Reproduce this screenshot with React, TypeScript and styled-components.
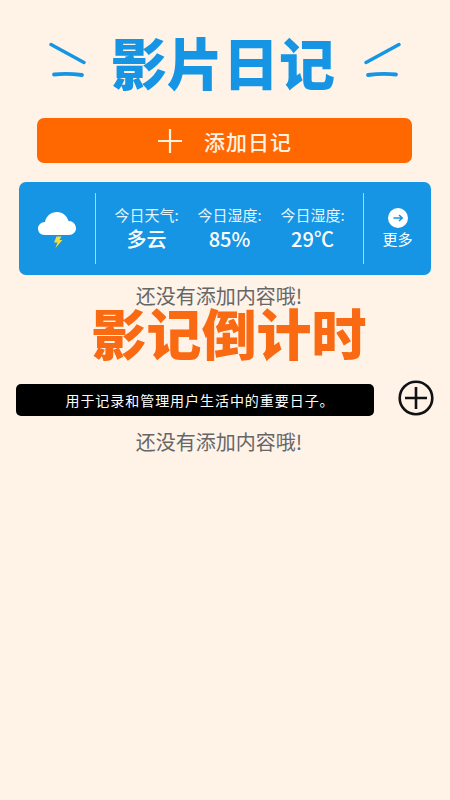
import styled, { createGlobalStyle } from "styled-components";

const GlobalStyle = createGlobalStyle`
  html, body {
    margin: 0;
    padding: 0;
    background: #fff3e8;
  }
  body {
    font-family: "Noto Sans CJK SC", "Noto Sans", sans-serif;
  }
`;

const Page = styled.div`
  width: 450px;
  height: 800px;
  overflow: hidden;
  box-sizing: border-box;
  padding-top: 30px;
  background: #fff3e8;
  display: flex;
  flex-direction: column;
  align-items: center;
`;

const Logo = styled.div`
  width: 352px;
  height: 65px;
  display: flex;
  align-items: center;
  justify-content: space-between;
`;

const LogoText = styled.h1`
  margin: 0 4px 4px 0;
  font-size: 56px;
  line-height: 62px;
  font-weight: 900;
  color: #1695e5;
  white-space: nowrap;
`;

const AddButton = styled.button`
  width: 375px;
  height: 45px;
  margin: 23px 1px 0 0;
  border: none;
  border-radius: 7px;
  background: #ff6700;
  color: #fff3e0;
  font-family: inherit;
  font-size: 21px;
  font-weight: 500;
  letter-spacing: 1px;
  display: flex;
  align-items: center;
  justify-content: center;
  gap: 22px;
  padding: 0 0 0 1px;
`;

const WeatherCard = styled.section`
  width: 412px;
  height: 93px;
  margin-top: 19px;
  box-sizing: border-box;
  padding: 11px 0;
  border-radius: 7px;
  background: #1695e5;
  color: #fff;
  display: flex;
  align-items: stretch;
`;

const IconCell = styled.div`
  width: 77px;
  flex: none;
  box-sizing: border-box;
  border-right: 1px solid #a9d7f3;
  display: flex;
  align-items: center;
  justify-content: center;
`;

const Stats = styled.div`
  flex: 1;
  display: grid;
  grid-template-columns: repeat(3, 83px);
  justify-content: center;
  align-content: center;
`;

const Stat = styled.div`
  display: flex;
  flex-direction: column;
  align-items: center;
`;

const StatLabel = styled.span`
  font-size: 15px;
  line-height: 20px;
  color: #e6f4fc;
  white-space: nowrap;
`;

const StatValue = styled.span`
  font-size: 20px;
  line-height: 28px;
  font-weight: 500;
`;

const MoreCell = styled.div`
  width: 67px;
  flex: none;
  border-left: 1px solid #a9d7f3;
  display: flex;
  flex-direction: column;
  align-items: center;
  justify-content: center;
  gap: 1px;
  font-size: 15px;
  line-height: 20px;
`;

const EmptyNote = styled.p<{ $top: number }>`
  margin: ${(p) => p.$top}px 12px 0 0;
  font-size: 20px;
  line-height: 28px;
  color: #666;
  text-align: center;
`;

const CountdownTitle = styled.h2`
  margin: -7px 0 0 8px;
  font-size: 55px;
  line-height: 56px;
  font-weight: 900;
  color: #f96a12;
  white-space: nowrap;
`;

const InfoRow = styled.div`
  width: 450px;
  box-sizing: border-box;
  margin-top: 21px;
  padding: 0 16px;
  display: flex;
  align-items: center;
  justify-content: space-between;
`;

const InfoBar = styled.div`
  width: 358px;
  height: 32px;
  box-sizing: border-box;
  padding-left: 10px;
  border-radius: 5px;
  background: #000;
  color: #fff;
  font-size: 14px;
  letter-spacing: 0.95px;
  display: flex;
  align-items: center;
  justify-content: center;
`;

const RoundPlus = styled.button`
  width: 36px;
  height: 36px;
  margin-bottom: 4px;
  padding: 0;
  border: none;
  background: none;
  display: block;
  flex: none;
`;

const Sparks = ({ flip }: { flip?: boolean }) => (
  <svg width="38" height="42" viewBox="0 0 38 42" style={flip ? { transform: "scaleX(-1)" } : undefined}>
    <path d="M2 2.500 L35 20.500" stroke="#1695e5" strokeWidth="3.4" strokeLinecap="round" fill="none" />
    <path d="M5 32.500 Q18 31 33 33" stroke="#1695e5" strokeWidth="3.8" strokeLinecap="round" fill="none" />
  </svg>
);

const PlusIcon = () => (
  <svg width="24" height="24" viewBox="0 0 24 24">
    <path d="M0 12H24M12 0V24" stroke="#fff3e0" strokeWidth="2.2" fill="none" />
  </svg>
);

const StormCloud = () => (
  <svg width="40" height="38" viewBox="0 0 40 38">
    <path
      d="M8 25 C3 25 1 21.500 1 18.500 C1 15 4 12 8 12 C9 6 14 2 20 2 C26 2 30 6 31.500 11 C36 11 39 14.500 39 18.500 C39 22 36 25 32 25 Z"
      fill="#fff"
    />
    <path d="M19.500 26.500 L24.500 26.500 L22.500 30 L25.500 30 L18.500 38 L20.500 32.500 L17 32.500 Z" fill="#f7dc3a" />
  </svg>
);

const ArrowBadge = () => (
  <svg width="20" height="20" viewBox="0 0 20 20">
    <circle cx="10" cy="10" r="10" fill="#fff" />
    <path d="M5.500 10H14M11 7L14.200 10L11 13" stroke="#1695e5" strokeWidth="1.500" fill="none" />
  </svg>
);

const stats = [
  { label: "今日天气:", value: "多云" },
  { label: "今日湿度:", value: "85%" },
  { label: "今日湿度:", value: "29℃" },
];

export default function App() {
  return (
    <Page>
      <GlobalStyle />
      <Logo>
        <Sparks />
        <LogoText>影片日记</LogoText>
        <Sparks flip />
      </Logo>
      <AddButton>
        <PlusIcon />
        添加日记
      </AddButton>
      <WeatherCard>
        <IconCell>
          <StormCloud />
        </IconCell>
        <Stats>
          {stats.map((s, i) => (
            <Stat key={i}>
              <StatLabel>{s.label}</StatLabel>
              <StatValue>{s.value}</StatValue>
            </Stat>
          ))}
        </Stats>
        <MoreCell>
          <ArrowBadge />
          更多
        </MoreCell>
      </WeatherCard>
      <EmptyNote $top={7}>还没有添加内容哦!</EmptyNote>
      <CountdownTitle>影记倒计时</CountdownTitle>
      <InfoRow>
        <InfoBar>用于记录和管理用户生活中的重要日子。</InfoBar>
        <RoundPlus aria-label="add">
          <svg width="36" height="36" viewBox="0 0 36 36">
            <circle cx="18" cy="18" r="16.300" stroke="#111" strokeWidth="2.600" fill="none" />
            <path d="M7 18H29M18 7V29" stroke="#111" strokeWidth="2.600" fill="none" />
          </svg>
        </RoundPlus>
      </InfoRow>
      <EmptyNote $top={8}>还没有添加内容哦!</EmptyNote>
    </Page>
  );
}
